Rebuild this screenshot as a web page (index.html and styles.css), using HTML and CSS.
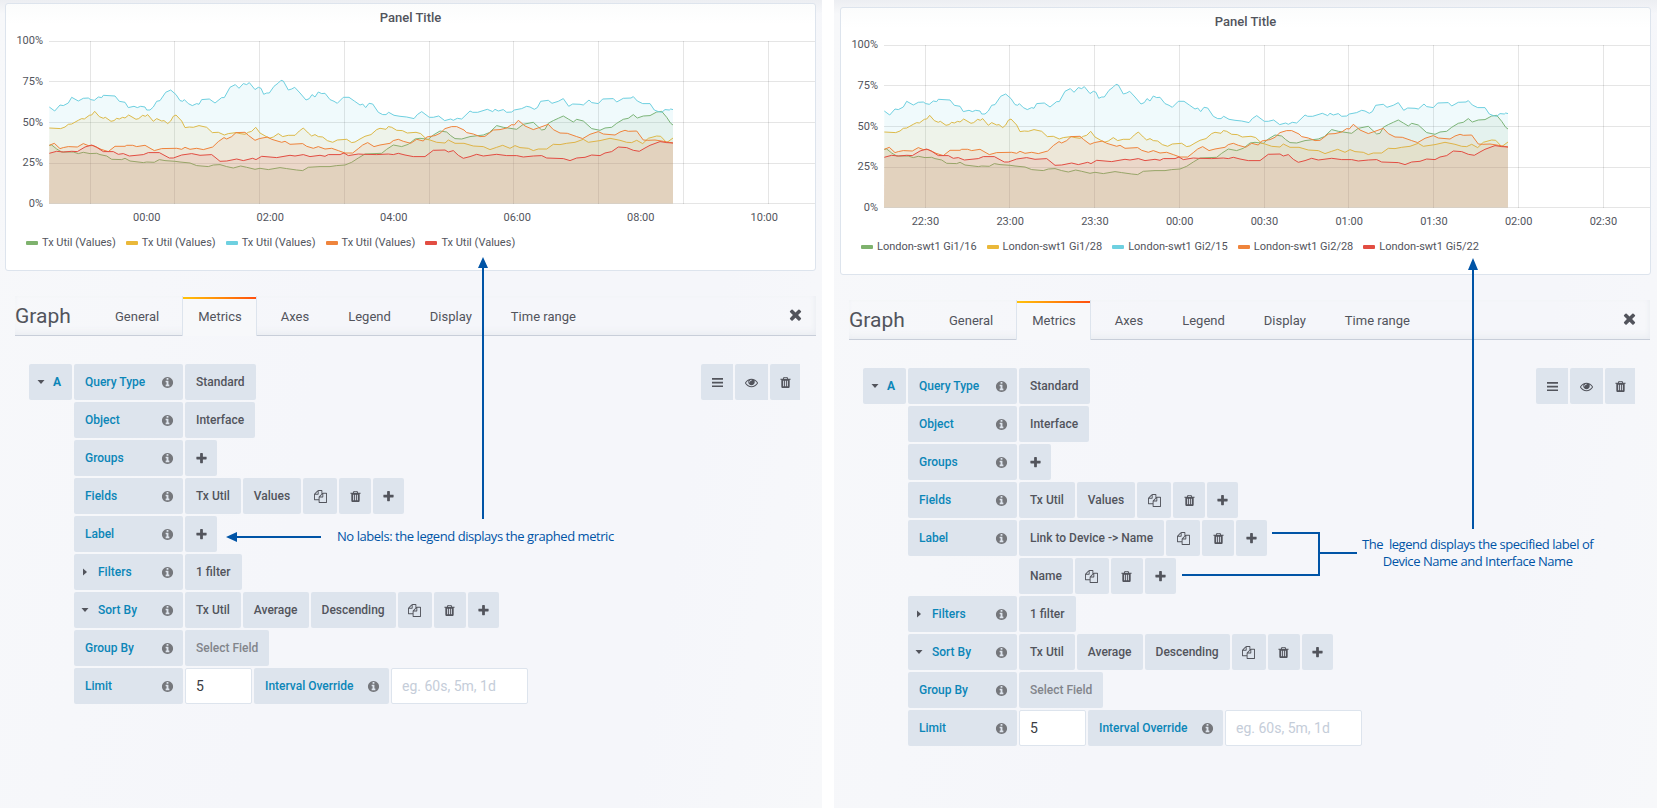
FILE: index.html
```
<!DOCTYPE html>
<html>
  <head>
    <meta charset="utf-8">
    <meta name="viewport" content="width=device-width, initial-scale=1.0">
    <title>Graph labels</title>
    <link rel="stylesheet" href="styles.css">
  </head>
  <body>
    <svg class="sprite">
      <symbol id="plus" viewBox="0 0 1792 1792"><path d="M1600 736v192q0 40-28 68t-68 28h-416v416q0 40-28 68t-68 28h-192q-40 0-68-28t-28-68v-416h-416q-40 0-68-28t-28-68v-192q0-40 28-68t68-28h416v-416q0-40 28-68t68-28h192q40 0 68 28t28 68v416h416q40 0 68 28t28 68z"/></symbol>
      <symbol id="times" viewBox="0 0 1792 1792"><path d="M1490 1322q0 40-28 68l-136 136q-28 28-68 28t-68-28l-294-294-294 294q-28 28-68 28t-68-28l-136-136q-28-28-28-68t28-68l294-294-294-294q-28-28-28-68t28-68l136-136q28-28 68-28t68 28l294 294 294-294q28-28 68-28t68 28l136 136q28 28 28 68t-28 68l-294 294 294 294q28 28 28 68z"/></symbol>
      <symbol id="trash" viewBox="0 0 1792 1792"><path d="M704 1376v-704q0-14-9-23t-23-9h-64q-14 0-23 9t-9 23v704q0 14 9 23t23 9h64q14 0 23-9t9-23zm256 0v-704q0-14-9-23t-23-9h-64q-14 0-23 9t-9 23v704q0 14 9 23t23 9h64q14 0 23-9t9-23zm256 0v-704q0-14-9-23t-23-9h-64q-14 0-23 9t-9 23v704q0 14 9 23t23 9h64q14 0 23-9t9-23zm-544-992h448l-48-117q-7-9-17-11h-317q-10 2-17 11zm928 32v64q0 14-9 23t-23 9h-96v948q0 83-47 143.500t-113 60.500h-832q-66 0-113-58.500t-47-141.500v-952h-96q-14 0-23-9t-9-23v-64q0-14 9-23t23-9h309l70-167q15-37 54-63t79-26h320q40 0 79 26t54 63l70 167h309q14 0 23 9t9 23z"/></symbol>
      <symbol id="info" viewBox="0 0 1792 1792"><path d="M1152 1376v-160q0-14-9-23t-23-9h-96v-512q0-14-9-23t-23-9h-320q-14 0-23 9t-9 23v160q0 14 9 23t23 9h96v320h-96q-14 0-23 9t-9 23v160q0 14 9 23t23 9h448q14 0 23-9t9-23zm-128-896v-160q0-14-9-23t-23-9h-192q-14 0-23 9t-9 23v160q0 14 9 23t23 9h192q14 0 23-9t9-23zm640 416q0 209-103 385.500t-279.500 279.500-385.500 103-385.500-103-279.500-279.500-103-385.500 103-385.500 279.500-279.500 385.500-103 385.500 103 279.500 279.500 103 385.500z"/></symbol>
      <symbol id="copy" viewBox="0 0 1792 1792"><path d="M1696 384q40 0 68 28t28 68v1216q0 40-28 68t-68 28h-960q-40 0-68-28t-28-68v-288h-544q-40 0-68-28t-28-68v-672q0-40 20-88t48-76l408-408q28-28 76-48t88-20h416q40 0 68 28t28 68v328q68-40 128-40h416zm-544 213l-299 299h299v-299zm-640-384l-299 299h299v-299zm196 647l316-316v-416h-384v416q0 40-28 68t-68 28h-416v640h512v-256q0-40 20-88t48-76zm956 804v-1152h-384v416q0 40-28 68t-68 28h-416v640h896z"/></symbol>
      <symbol id="eye" viewBox="0 0 1792 1792"><path d="M1664 960q-152-236-381-353 61 104 61 225 0 185-131.500 316.500t-316.500 131.500-316.500-131.500-131.500-316.500q0-121 61-225-229 117-381 353 133 205 333.500 326.500t434.500 121.500 434.500-121.500 333.500-326.500zm-720-384q0-20-14-34t-34-14q-125 0-214.500 89.500t-89.500 214.500q0 20 14 34t34 14 34-14 14-34q0-86 61-147t147-61q20 0 34-14t14-34zm848 384q0 34-20 69-140 230-376.500 368.500t-499.500 138.500-499.500-139-376.500-368q-20-35-20-69t20-69q140-229 376.500-368t499.500-139 499.500 139 376.500 368q20 35 20 69z"/></symbol>
      <symbol id="bars" viewBox="0 0 13 13"><path d="M1 2h11v1.700H1zM1 5.700h11v1.700H1zM1 9.400h11v1.700H1z"/></symbol>
      <symbol id="down" viewBox="0 0 8 8"><path d="M.5 2h7L4 6z"/></symbol>
      <symbol id="right" viewBox="0 0 8 8"><path d="M2 .5v7L6 4z"/></symbol>
    </svg>

    <div class="page">
      <section class="shot">
        <div class="panel">
          <h2 class="panel-title">Panel Title</h2>
          <div class="chart">
            <div class="y-axis"><span>100%</span><span>75%</span><span>50%</span><span>25%</span><span>0%</span></div>
            <svg class="plot" width="766" height="164"></svg>
          </div>
          <div class="x-axis x-hours"><span>00:00</span><span>02:00</span><span>04:00</span><span>06:00</span><span>08:00</span><span>10:00</span></div>
          <div class="legend">
            <span class="green">Tx Util (Values)</span>
            <span class="yellow">Tx Util (Values)</span>
            <span class="cyan">Tx Util (Values)</span>
            <span class="orange">Tx Util (Values)</span>
            <span class="red">Tx Util (Values)</span>
          </div>
        </div>

        <div class="tabs">
          <h1>Graph</h1>
          <a>General</a><a class="active">Metrics</a><a>Axes</a><a>Legend</a><a>Display</a><a>Time range</a>
          <svg class="close"><use href="#times"/></svg>
        </div>

        <div class="query">
          <div class="letter"><svg class="caret"><use href="#down"/></svg>A</div>
          <div class="rows">
            <div class="row"><label>Query Type<svg><use href="#info"/></svg></label><span>Standard</span></div>
            <div class="row"><label>Object<svg><use href="#info"/></svg></label><span>Interface</span></div>
            <div class="row"><label>Groups<svg><use href="#info"/></svg></label><b class="add"><svg><use href="#plus"/></svg></b></div>
            <div class="row"><label>Fields<svg><use href="#info"/></svg></label><span>Tx Util</span><span>Values</span><b class="copy"><svg><use href="#copy"/></svg></b><b><svg><use href="#trash"/></svg></b><b class="last"><svg><use href="#plus"/></svg></b></div>
            <div class="row"><label>Label<svg><use href="#info"/></svg></label><b class="add"><svg><use href="#plus"/></svg></b></div>
            <div class="row"><label class="fold"><svg class="caret"><use href="#right"/></svg>Filters<svg><use href="#info"/></svg></label><span>1 filter</span></div>
            <div class="row"><label class="fold"><svg class="caret"><use href="#down"/></svg>Sort By<svg><use href="#info"/></svg></label><span>Tx Util</span><span>Average</span><span>Descending</span><b class="copy"><svg><use href="#copy"/></svg></b><b><svg><use href="#trash"/></svg></b><b class="last"><svg><use href="#plus"/></svg></b></div>
            <div class="row"><label>Group By<svg><use href="#info"/></svg></label><span class="empty">Select Field</span></div>
            <div class="row"><label>Limit<svg><use href="#info"/></svg></label><input class="limit" value="5"><label class="override">Interval Override<svg><use href="#info"/></svg></label><input class="interval" placeholder="eg. 60s, 5m, 1d"></div>
          </div>
          <div class="actions"><b><svg><use href="#bars"/></svg></b><b class="view"><svg><use href="#eye"/></svg></b><b class="remove"><svg><use href="#trash"/></svg></b></div>
        </div>
      </section>

      <section class="shot second">
        <div class="panel">
          <h2 class="panel-title">Panel Title</h2>
          <div class="chart">
            <div class="y-axis"><span>100%</span><span>75%</span><span>50%</span><span>25%</span><span>0%</span></div>
            <svg class="plot" width="766" height="164"></svg>
          </div>
          <div class="x-axis x-halves"><span>22:30</span><span>23:00</span><span>23:30</span><span>00:00</span><span>00:30</span><span>01:00</span><span>01:30</span><span>02:00</span><span>02:30</span></div>
          <div class="legend">
            <span class="green">London-swt1 Gi1/16</span>
            <span class="yellow">London-swt1 Gi1/28</span>
            <span class="cyan">London-swt1 Gi2/15</span>
            <span class="orange">London-swt1 Gi2/28</span>
            <span class="red">London-swt1 Gi5/22</span>
          </div>
        </div>

        <div class="tabs">
          <h1>Graph</h1>
          <a>General</a><a class="active">Metrics</a><a>Axes</a><a>Legend</a><a>Display</a><a>Time range</a>
          <svg class="close"><use href="#times"/></svg>
        </div>

        <div class="query">
          <div class="letter"><svg class="caret"><use href="#down"/></svg>A</div>
          <div class="rows">
            <div class="row"><label>Query Type<svg><use href="#info"/></svg></label><span>Standard</span></div>
            <div class="row"><label>Object<svg><use href="#info"/></svg></label><span>Interface</span></div>
            <div class="row"><label>Groups<svg><use href="#info"/></svg></label><b class="add"><svg><use href="#plus"/></svg></b></div>
            <div class="row"><label>Fields<svg><use href="#info"/></svg></label><span>Tx Util</span><span>Values</span><b class="copy"><svg><use href="#copy"/></svg></b><b><svg><use href="#trash"/></svg></b><b class="last"><svg><use href="#plus"/></svg></b></div>
            <div class="row"><label>Label<svg><use href="#info"/></svg></label><span>Link to Device -&gt; Name</span><b class="copy"><svg><use href="#copy"/></svg></b><b><svg><use href="#trash"/></svg></b><b class="last"><svg><use href="#plus"/></svg></b></div>
            <div class="row indent"><span>Name</span><b class="copy"><svg><use href="#copy"/></svg></b><b><svg><use href="#trash"/></svg></b><b class="last"><svg><use href="#plus"/></svg></b></div>
            <div class="row"><label class="fold"><svg class="caret"><use href="#right"/></svg>Filters<svg><use href="#info"/></svg></label><span>1 filter</span></div>
            <div class="row"><label class="fold"><svg class="caret"><use href="#down"/></svg>Sort By<svg><use href="#info"/></svg></label><span>Tx Util</span><span>Average</span><span>Descending</span><b class="copy"><svg><use href="#copy"/></svg></b><b><svg><use href="#trash"/></svg></b><b class="last"><svg><use href="#plus"/></svg></b></div>
            <div class="row"><label>Group By<svg><use href="#info"/></svg></label><span class="empty">Select Field</span></div>
            <div class="row"><label>Limit<svg><use href="#info"/></svg></label><input class="limit" value="5"><label class="override">Interval Override<svg><use href="#info"/></svg></label><input class="interval" placeholder="eg. 60s, 5m, 1d"></div>
          </div>
          <div class="actions"><b><svg><use href="#bars"/></svg></b><b class="view"><svg><use href="#eye"/></svg></b><b class="remove"><svg><use href="#trash"/></svg></b></div>
        </div>
      </section>

      <!-- arrows and notes drawn over both screens -->
      <svg class="arrows" width="1657" height="808">
        <path class="line" d="M483 266V519M236 537H321M1473 268V529M1272 533H1319V575H1182M1319 553H1357"/>
        <path class="head" d="M483 257l5 11h-10zM226 537l11-5v10zM1473 258l5 12h-10z"/>
      </svg>
      <p class="note note-left">No labels: the legend displays the graphed metric</p>
      <p class="note note-right">The&nbsp; legend displays the specified label of<br>Device Name and Interface Name</p>
    </div>
    <script src="chart.js"></script>
  </body>
</html>
```
FILE: styles.css
```
* {
  box-sizing: border-box;
}
body {
  margin: 0;
  background: #fff;
  color: #52545c;
  font-family: Roboto, "Liberation Sans", sans-serif;
  font-size: 12px;
}
svg {
  fill: currentColor;
}
.sprite {
  display: none;
}
.page {
  position: relative;
  display: flex;
  gap: 12px;
  width: 1657px;
  height: 808px;
  overflow: hidden;
}
.shot {
  width: 822px;
  padding: 3px 6px 0 5px;
  background: linear-gradient(#eceef2, rgba(236, 238, 242, 0) 14px), linear-gradient(100deg, #f7f8fa, #f5f6fa 40%, #f5f6fa 80%, #f7f8fa);
}
.second {
  width: 823px;
  padding: 7px 6px 0 6px;
}

/* graph panel */
.panel {
  width: 811px;
  height: 268px;
  border: 1px solid #dde4ed;
  border-radius: 3px;
  background: linear-gradient(#fbfcfc, #fff 20px);
}
.panel-title {
  margin: 0;
  padding-top: 4px;
  height: 37px;
  font-size: 13px;
  font-weight: 500;
  line-height: 19px;
  text-align: center;
}
.chart {
  display: flex;
  height: 164px;
}
.y-axis {
  display: flex;
  flex-direction: column;
  justify-content: space-between;
  width: 43px;
  height: 177px;
  margin-top: -7px;
  padding-right: 6px;
  font-size: 11px;
  line-height: 14px;
  text-align: right;
}
.x-axis {
  display: flex;
  margin-top: 6px;
  font-size: 11px;
  line-height: 14px;
  text-align: center;
}
.x-axis span {
  flex: none;
}
.x-hours {
  padding-left: 79px;
}
.x-hours span {
  width: 123.5px;
}
.x-halves {
  padding-left: 42px;
}
.x-halves span {
  width: 84.75px;
}
.legend {
  display: flex;
  gap: 10px;
  padding: 11px 0 0 20px;
  line-height: 14px;
}
.legend span {
  display: flex;
  align-items: center;
  gap: 4px;
  white-space: nowrap;
  font-size: 11px;
}
.legend span::before {
  content: "";
  width: 12px;
  height: 4px;
  border-radius: 1px;
  background: var(--series);
}
.green { --series: #7eb26d; }
.yellow { --series: #eab839; }
.cyan { --series: #6ed0e0; }
.orange { --series: #ef843c; }
.red { --series: #e24d42; }

.grid {
  stroke: rgba(0, 0, 0, 0.1);
  shape-rendering: crispEdges;
}
.area {
  fill: var(--series);
  fill-opacity: 0.1;
}
.series {
  fill: none;
  stroke: var(--series);
  stroke-width: 1;
}

/* tab bar */
.tabs {
  display: flex;
  align-items: stretch;
  width: 801px;
  height: 40px;
  margin: 25px 0 0 10px;
  border-bottom: 1px solid #c8ced9;
  box-shadow: inset 0 -6px 8px -4px #e9ecf1, inset -3px 0 6px -3px #e9ecf1;
}
.second .tabs {
  margin-left: 9px;
}
.tabs h1 {
  width: 84px;
  margin: 0;
  font-size: 21px;
  font-weight: 400;
  line-height: 41px;
}
.tabs a {
  margin-right: 8px;
  padding: 0 14px 0 15px;
  border: 1px solid transparent;
  border-width: 0 1px;
  font-size: 13px;
  line-height: 41px;
}
.tabs .active {
  height: 40px;
  padding-top: 1px;
  border-color: #dde4ed;
  background: linear-gradient(90deg, #ffc20a, #ff9d0a 35%, #ff7a0a 65%, #ff4f0f) 0 1px / 100% 2px no-repeat, #f7f8fa;
  line-height: 39px;
}
.tabs .close {
  width: 17px;
  height: 17px;
  margin: 10px 12px 0 auto;
}

/* query editor */
.query {
  display: flex;
  gap: 2px;
  margin: 28px 0 0 24px;
}
.second .query {
  margin-left: 23px;
}
.rows {
  display: flex;
  flex-direction: column;
  gap: 2px;
}
.row, .actions {
  display: flex;
  gap: 2px;
}
.indent {
  padding-left: 111px;
}
.letter, .row label, .row span, .row b, .actions b {
  display: flex;
  align-items: center;
  height: 36px;
  border-radius: 2px;
  background: #dde4ed;
  font-weight: 500;
}
.row span {
  padding: 0 11px;
}
.row .empty {
  color: #82858b;
}
.letter, .row label {
  color: #0b86b8;
}
.letter {
  width: 43px;
  padding-left: 8px;
  gap: 8px;
  font-weight: 700;
}
.caret {
  width: 8px;
  height: 8px;
  color: #52545c;
}
.row label {
  width: 109px;
  padding: 0 9px 0 11px;
}
.row label svg:last-child {
  width: 13px;
  height: 13px;
  margin-left: auto;
  color: #75777c;
}
.row .fold {
  padding-left: 7px;
}
.fold .caret {
  margin-right: 9px;
}
.row .override {
  width: 135px;
}
.row b, .actions b {
  justify-content: center;
  width: 32px;
}
.row b svg, .actions svg {
  width: 13px;
  height: 13px;
}
.row .copy {
  width: 34px;
}
.row .last {
  width: 31px;
}
.row input {
  height: 36px;
  padding: 0 10px;
  border: 1px solid #dde4ed;
  border-radius: 2px;
  background: #fff;
  color: #3a3c42;
  font: 14px Roboto, sans-serif;
}
.row input::placeholder {
  color: #c5cdd9;
}
.limit {
  width: 67px;
}
.interval {
  width: 137px;
}
.actions {
  margin: 0 16px 0 auto;
}
.actions b {
  border-radius: 2px 0 0 2px;
}
.actions .view {
  width: 33px;
}
.actions .remove {
  width: 30px;
}

/* notes */
.arrows {
  position: absolute;
  left: 0;
  top: 0;
}
.line {
  fill: none;
  stroke: #0054a6;
  stroke-width: 2;
}
.head {
  fill: #0054a6;
}
.note {
  position: absolute;
  margin: 0;
  color: #0054a6;
  font: 13px/17px "Open Sans", sans-serif;
  letter-spacing: -0.45px;
  white-space: nowrap;
  text-align: center;
}
.note-left {
  left: 337px;
  top: 528px;
}
.note-right {
  left: 1362px;
  top: 536px;
}
```
FILE: chart.js
```
// points are x,y at three units per pixel, origin at 147,124
const SERIES = {
  green: '148,436 155,435 170,447 185,456 220,456 235,461 250,457 270,461 290,460 300,464 320,468 335,478 365,479 375,475 390,483 430,488 440,486 463,487 478,479 495,482 525,484 540,486 570,489 590,497 625,500 640,495 660,494 680,500 700,504 722,498 740,502 765,508 780,505 805,509 840,503 860,506 890,510 908,512 925,502 960,500 990,500 1010,497 1035,495 1055,487 1075,474 1095,462 1145,460 1160,448 1180,435 1205,440 1225,433 1245,417 1260,415 1285,418 1300,405 1320,393 1340,396 1352,407 1365,416 1385,417 1410,410 1450,405 1468,398 1490,377 1510,382 1550,388 1570,373 1600,367 1612,378 1625,390 1635,388 1645,370 1660,362 1675,355 1690,348 1705,357 1720,366 1730,358 1750,363 1775,386 1800,391 1815,384 1835,382 1850,370 1870,358 1885,355 1900,344 1912,354 1930,348 1950,347 1970,336 1985,334 2000,352 2012,370 2019,375',
  yellow: '148,384 182,386 195,381 205,373 215,372 235,361 245,356 253,357 268,346 275,345 284,334 298,350 310,355 316,352 333,364 342,362 350,355 358,357 368,352 375,354 386,345 408,358 416,356 428,346 436,349 443,344 460,364 470,356 485,363 492,362 503,371 512,363 520,349 528,345 545,363 555,383 568,381 580,382 597,377 620,382 637,398 655,397 673,405 685,401 708,398 720,401 735,403 745,397 755,394 767,382 780,399 808,415 820,411 835,401 848,410 865,406 885,406 898,393 910,384 925,399 935,408 945,404 955,410 968,411 982,422 998,427 1012,420 1040,418 1055,428 1065,426 1080,417 1095,409 1113,404 1130,389 1140,385 1158,388 1165,380 1175,382 1190,391 1207,392 1222,399 1248,397 1262,401 1280,418 1290,420 1310,427 1335,429 1345,420 1365,430 1392,430 1420,438 1450,440 1470,449 1490,442 1508,436 1530,445 1545,437 1560,443 1585,445 1600,452 1615,447 1640,447 1660,433 1680,434 1700,430 1725,427 1750,418 1765,427 1800,422 1830,415 1860,421 1880,427 1895,428 1910,421 1928,431 1945,415 1970,408 1982,409 2000,428 2019,414',
  cyan: '148,321 164,333 180,315 190,317 205,309 215,292 235,303 250,295 265,294 272,299 283,301 295,291 305,293 310,286 345,288 358,304 375,307 385,323 402,319 412,323 422,319 435,321 440,330 450,330 460,321 470,304 480,302 497,277 512,270 528,284 540,302 548,304 553,299 565,311 577,317 590,311 597,313 605,299 628,297 645,309 665,293 673,293 690,262 706,254 717,265 730,251 740,254 748,248 765,269 775,262 783,265 791,283 800,279 808,279 822,259 835,249 843,241 850,243 865,270 875,267 884,262 900,279 918,300 928,296 936,284 945,291 955,276 965,281 975,280 990,299 1002,304 1012,310 1030,292 1047,292 1063,303 1080,315 1088,312 1097,323 1107,310 1118,312 1135,337 1148,344 1158,344 1166,337 1182,346 1200,349 1220,351 1242,356 1252,344 1265,335 1288,352 1300,352 1316,348 1334,362 1352,357 1360,361 1372,355 1385,357 1410,333 1418,337 1433,337 1462,328 1478,335 1485,328 1495,333 1510,329 1520,337 1535,336 1543,330 1565,326 1580,319 1590,321 1603,328 1612,323 1622,304 1645,301 1656,310 1675,304 1690,296 1706,319 1718,312 1740,313 1750,315 1767,300 1775,308 1795,311 1808,297 1840,296 1850,306 1870,295 1893,294 1900,290 1912,303 1928,311 1950,311 1963,330 1975,335 1985,337 1995,329 2008,330 2012,327 2019,329',
  orange: '148,436 163,430 180,446 190,443 205,440 232,441 250,431 265,437 280,437 293,443 303,448 325,455 345,439 375,439 380,436 398,436 410,440 435,436 463,452 485,446 530,445 545,448 555,442 570,448 590,445 610,449 638,441 655,425 672,413 680,417 695,410 708,398 735,397 745,406 765,421 778,416 803,411 815,418 845,427 855,424 870,433 908,431 920,439 940,445 955,440 975,447 995,445 1015,452 1035,459 1058,459 1075,446 1088,435 1103,428 1122,440 1140,435 1170,430 1180,422 1195,418 1210,424 1232,430 1250,418 1270,423 1280,411 1305,407 1320,400 1335,386 1355,380 1370,380 1392,390 1400,398 1420,402 1440,410 1455,409 1480,390 1500,389 1520,384 1535,374 1543,375 1555,361 1575,378 1600,389 1620,382 1645,373 1660,389 1680,399 1702,400 1730,410 1748,416 1770,403 1795,395 1810,402 1845,405 1860,396 1875,391 1885,394 1910,393 1930,420 1943,421 1965,420 1990,424 2019,429',
  red: '148,460 170,454 190,456 215,454 232,455 255,441 275,435 290,442 310,455 340,455 355,463 370,461 388,468 430,464 445,458 478,458 508,474 520,474 545,465 575,461 600,466 635,464 648,474 660,484 680,483 710,477 730,482 758,475 768,479 785,469 830,473 870,466 885,468 910,464 930,470 960,466 975,469 985,464 1020,464 1032,459 1045,467 1075,462 1090,463 1130,464 1165,462 1180,464 1195,460 1215,465 1240,470 1275,470 1300,451 1335,450 1345,456 1360,452 1375,466 1390,475 1410,470 1430,463 1450,468 1490,463 1520,467 1550,467 1570,471 1600,468 1625,467 1640,474 1690,476 1710,482 1730,474 1755,472 1775,465 1800,467 1815,459 1835,455 1855,441 1880,443 1900,451 1918,454 1935,444 1950,436 1980,425 2000,428 2019,429'
};

const toPixels = list => list.split(' ')
  .map(p => p.split(',').map(Number))
  .map(([x, y]) => [((x - 147) / 3).toFixed(1), ((y - 124) / 3 + 0.3).toFixed(1)].join(','))
  .join(' ');

let svg = '';
[0, 40, 81, 122, 162].forEach(y => {
  svg += `<path class="grid" d="M0 ${y + 0.5}H766"/>`;
});
[41, 125, 210, 295, 380, 464, 549, 634, 719].forEach(x => {
  svg += `<path class="grid" d="M${x + 0.5} 0V163"/>`;
});
// each fill tints the lines drawn before it
Object.entries(SERIES).forEach(([name, list]) => {
  const points = toPixels(list);
  svg += `<polygon class="area ${name}" points="0,162.500 ${points} 624,162.500"/>`;
  svg += `<polyline class="series ${name}" points="${points}"/>`;
});

document.querySelectorAll('.plot').forEach(plot => plot.innerHTML = svg);
```
